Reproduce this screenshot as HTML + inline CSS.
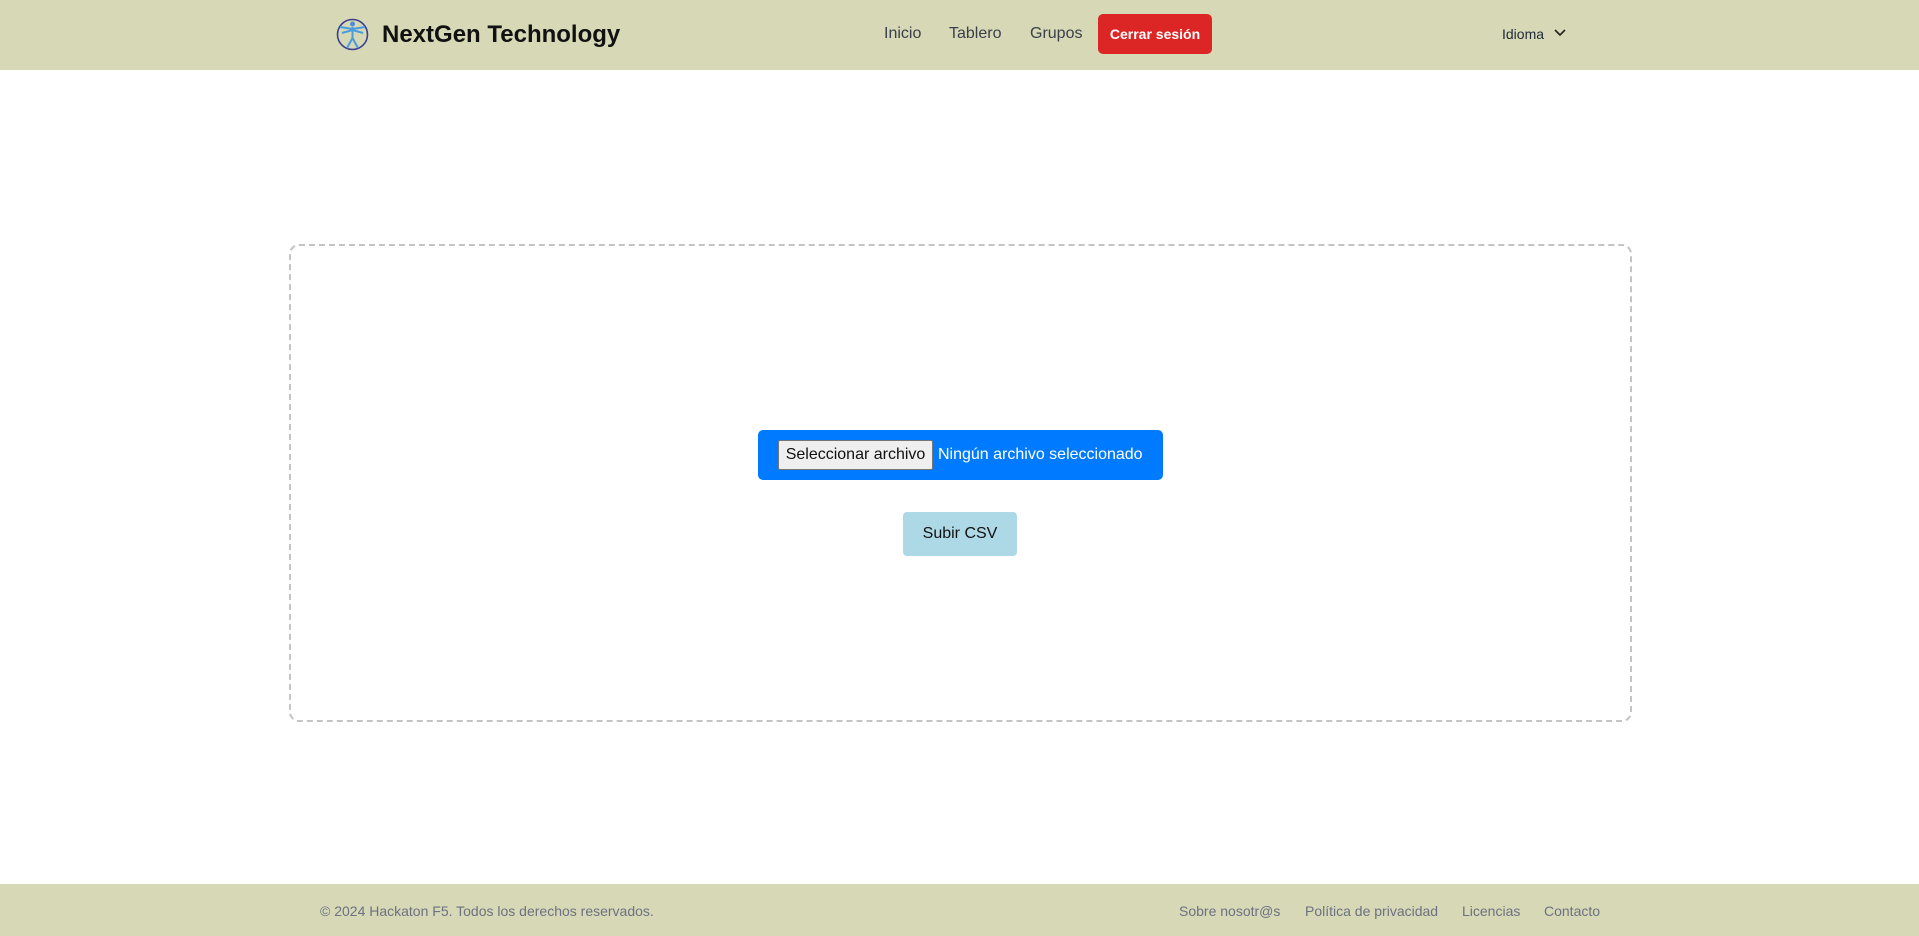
<!DOCTYPE html>
<html><head><meta charset="utf-8"><style>
*{margin:0;padding:0;box-sizing:border-box}
body{width:1919px;height:936px;position:relative;background:#fff;font-family:"Liberation Sans",Arial,sans-serif;overflow:hidden}
.hdr{position:absolute;left:0;top:0;width:1919px;height:70px;background:#d6d8b6}
.abs{position:absolute;white-space:nowrap}
.nav{font-size:16px;color:#3a3f4a;top:25px}
.btn{position:absolute;left:1098px;top:14px;width:114px;height:40px;background:#dc2626;color:#fff;font-weight:bold;font-size:14px;border-radius:5px;text-align:center;line-height:40px}
.box{position:absolute;left:289px;top:244px;width:1343px;height:478px;border:2px dashed #c4c4c4;border-radius:10px}
.blue{position:absolute;left:758px;top:430px;width:405px;height:50px;background:#007bff;border-radius:5px}
.fb{position:absolute;left:20px;top:10px;width:155px;height:30px;background:#efefef;border:1px solid #767676;border-radius:2px;font-size:16px;line-height:28px;text-align:center;color:#111}
.ft{position:absolute;left:0;top:884px;width:1919px;height:52px;background:#d6d8b6}
.fl{font-size:14px;color:#6b7280;top:903px}
</style></head><body>
<div class="hdr"></div>
<svg class="abs" style="left:336px;top:18px" width="33" height="33" viewBox="0 0 33 33">
<circle cx="16.5" cy="16.5" r="15" fill="none" stroke="#3c3f8f" stroke-width="1.6"/>
<circle cx="16.5" cy="6" r="2.5" fill="#4a8fd8"/>
<path d="M4 9 L16.5 11 L29 9 M16.5 9 V20 M16.5 20 L11 30 M16.5 20 L22 30 M6 15 L16.5 12 L27 15" stroke="#4a9be0" stroke-width="2" fill="none"/>
</svg>
<div class="abs" style="left:382px;top:21px;font-size:24px;font-weight:bold;color:#111">NextGen Technology</div>
<div class="abs nav" style="left:884px">Inicio</div>
<div class="abs nav" style="left:949px">Tablero</div>
<div class="abs nav" style="left:1030px">Grupos</div>
<div class="btn">Cerrar sesión</div>
<div class="abs" style="left:1502px;top:26px;font-size:14px;color:#1f2937">Idioma</div>
<svg class="abs" style="left:1553px;top:28px" width="14" height="10" viewBox="0 0 14 10"><path d="M2 2 L7 7 L12 2" stroke="#222" stroke-width="1.6" fill="none"/></svg>
<div class="box"></div>
<div class="blue"><div class="fb">Seleccionar archivo</div><div class="abs" style="left:180px;top:16px;font-size:16px;color:#fff">Ningún archivo seleccionado</div></div>
<div class="abs" style="left:903px;top:512px;width:114px;height:44px;background:#add8e6;border-radius:4px;font-size:16px;line-height:44px;text-align:center;color:#111">Subir CSV</div>
<div class="ft"></div>
<div class="abs fl" style="left:320px">© 2024 Hackaton F5. Todos los derechos reservados.</div>
<div class="abs fl" style="left:1179px">Sobre nosotr@s</div>
<div class="abs fl" style="left:1305px">Política de privacidad</div>
<div class="abs fl" style="left:1462px">Licencias</div>
<div class="abs fl" style="left:1544px">Contacto</div>
</body></html>
